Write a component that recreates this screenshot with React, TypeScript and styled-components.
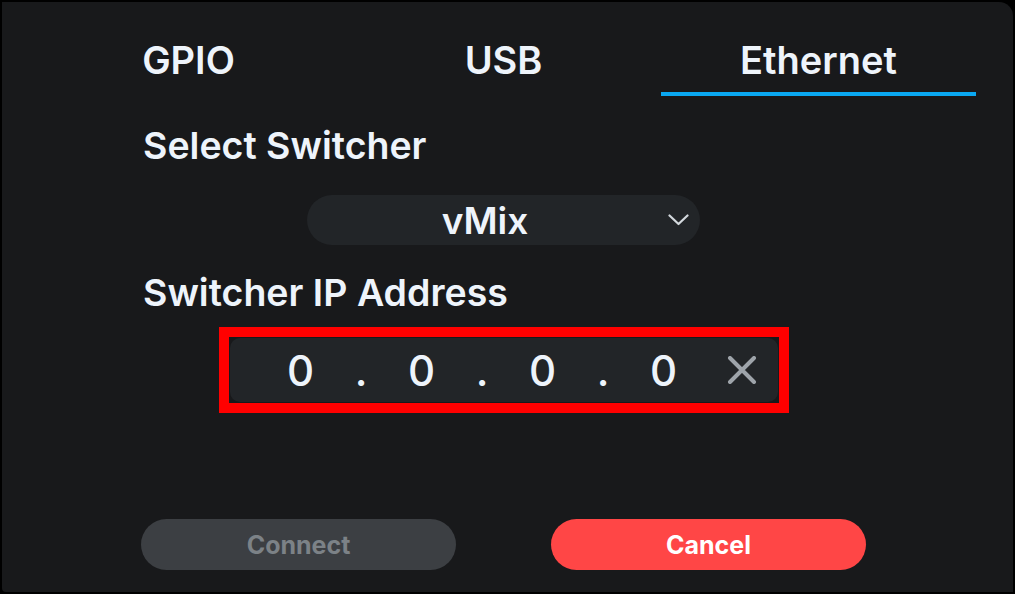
import React, { useState } from "react";
import styled, { createGlobalStyle } from "styled-components";

const GlobalStyle = createGlobalStyle`
  html, body {
    margin: 0;
    padding: 0;
    background: #000;
  }
  body {
    font-family: Inter, "Noto Sans", sans-serif;
    -webkit-font-smoothing: antialiased;
  }
`;

const tabs = ["GPIO", "USB", "Ethernet"];
const octets = ["0", "0", "0", "0"];

function Chevron() {
  return (
    <svg width="21" height="12" viewBox="0 0 21 12" fill="none">
      <path d="M1.5 1.5 L10.5 10 L19.5 1.5" stroke="#d3d8dd" strokeWidth="2.2" strokeLinecap="round" strokeLinejoin="round" />
    </svg>
  );
}

function ClearIcon() {
  return (
    <svg width="30" height="28" viewBox="0 0 30 28" fill="none">
      <path d="M3 2 L27 26 M27 2 L3 26" stroke="#9ea4aa" strokeWidth="4" strokeLinecap="round" />
    </svg>
  );
}

export default function App() {
  const [active, setActive] = useState(2);

  return (
    <>
      <GlobalStyle />
      <Frame>
        <Panel>
          <Content>
            <TabRow>
              {tabs.map((t, i) => (
                <Tab key={t} $active={i === active} onClick={() => setActive(i)}>
                  {t}
                </Tab>
              ))}
            </TabRow>

            <Label $top={30}>Select Switcher</Label>
            <Select>
              <SelectValue>vMix</SelectValue>
              <Chevron />
            </Select>

            <Label $top={28}>Switcher IP Address</Label>
            <Highlight>
              <IpField>
                {octets.map((o, i) => (
                  <React.Fragment key={i}>
                    {i > 0 && <Dot>.</Dot>}
                    <Octet>{o}</Octet>
                  </React.Fragment>
                ))}
                <ClearButton>
                  <ClearIcon />
                </ClearButton>
              </IpField>
            </Highlight>

            <ButtonRow>
              <Button $variant="disabled">Connect</Button>
              <Button $variant="danger">Cancel</Button>
            </ButtonRow>
          </Content>
        </Panel>
      </Frame>
    </>
  );
}

const Frame = styled.div`
  width: 1015px;
  height: 594px;
  padding: 2px;
  box-sizing: border-box;
  background: #000;
`;

const Panel = styled.main`
  height: 100%;
  background: #18191b;
  border-top-right-radius: 14px;
  border-bottom-left-radius: 4px;
  overflow: hidden;
`;

const Content = styled.div`
  width: 945px;
  margin-left: 29px;
  display: flex;
  flex-direction: column;
`;

const TabRow = styled.nav`
  margin-top: 26px;
  display: grid;
  grid-template-columns: repeat(3, 1fr);
`;

const Tab = styled.div<{ $active: boolean }>`
  height: 64px;
  display: flex;
  align-items: center;
  justify-content: center;
  border-bottom: 4px solid ${(p) => (p.$active ? "#0aa8f2" : "transparent")};
  color: #eef4fb;
  font-size: 38px;
  font-weight: 600;
  cursor: pointer;
`;

const Label = styled.h2<{ $top: number }>`
  margin: ${(p) => p.$top}px 0 0 112px;
  color: #eef4fb;
  font-size: 37.5px;
  font-weight: 600;
  line-height: 40px;
`;

const Select = styled.div`
  align-self: center;
  margin-top: 29px;
  width: 393px;
  height: 50px;
  box-sizing: border-box;
  padding-right: 11px;
  border-radius: 25px;
  background: #222528;
  display: flex;
  align-items: center;
  gap: 5px;
`;

const SelectValue = styled.span`
  flex: 1;
  text-align: center;
  color: #eef4fb;
  font-size: 37px;
  font-weight: 600;
`;

const Highlight = styled.div`
  align-self: center;
  margin-top: 14px;
  border: 10px solid #ff0000;
  padding: 1px;
`;

const IpField = styled.div`
  width: 548px;
  height: 64px;
  box-sizing: border-box;
  padding-left: 30px;
  border-radius: 10px;
  background: #222528;
  display: flex;
  align-items: center;
`;

const Octet = styled.span`
  width: 82px;
  text-align: center;
  color: #eef4fb;
  font-size: 42px;
  font-weight: 500;
`;

const Dot = styled.span`
  width: 39px;
  text-align: center;
  color: #eef4fb;
  font-size: 42px;
  font-weight: 500;
`;

const ClearButton = styled.span`
  margin-left: 22px;
  display: flex;
  align-items: center;
`;

const ButtonRow = styled.div`
  margin: 106px 0 0 110px;
  display: flex;
  gap: 95px;
`;

const Button = styled.button<{ $variant: "disabled" | "danger" }>`
  width: 315px;
  height: 51px;
  border: none;
  border-radius: 26px;
  font-family: inherit;
  font-size: 25px;
  font-weight: 700;
  background: ${(p) => (p.$variant === "danger" ? "#ff4646" : "#3c3f43")};
  color: ${(p) => (p.$variant === "danger" ? "#ffffff" : "#7c8287")};
`;
